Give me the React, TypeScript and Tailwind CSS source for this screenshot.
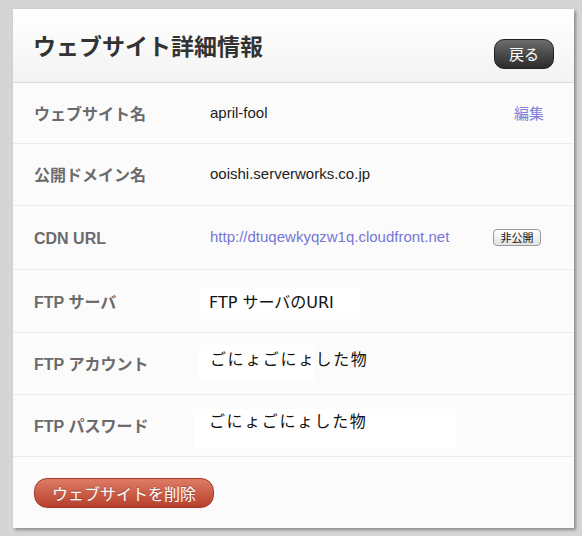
import React from "react";

const SANS = "font-['Liberation_Sans','Noto_Sans_CJK_JP',sans-serif]";
const CJK = "font-['Noto_Sans_CJK_JP','Liberation_Sans',sans-serif]";
const FTP_FONT = "font-['DejaVu_Sans','Noto_Sans_CJK_JP',sans-serif]";

interface FtpBox {
  w: string;
  h: string;
  mt: string;
  pl: string;
  pt: string;
  ml: string;
}

interface Row {
  label: string;
  height: string;
  value?: string;
  link?: string;
  ftp?: FtpBox;
  action?: "edit" | "private";
}

const ROWS: Row[] = [
  { label: "ウェブサイト名", height: "h-[61px]", value: "april-fool", action: "edit" },
  { label: "公開ドメイン名", height: "h-[62px]", value: "ooishi.serverworks.co.jp" },
  {
    label: "CDN URL",
    height: "h-[64px]",
    link: "http://dtuqewkyqzw1q.cloudfront.net",
    action: "private",
  },
  {
    label: "FTP サーバ",
    height: "h-[63px]",
    value: "FTP サーバのURI",
    ftp: { w: "w-[160px]", h: "h-[32px]", mt: "mt-[17px]", pl: "pl-[9px]", pt: "pt-[6px]", ml: "-ml-[10px]" },
  },
  {
    label: "FTP アカウント",
    height: "h-[62px]",
    value: "ごにょごにょした物",
    ftp: { w: "w-[116px]", h: "h-[36px]", mt: "mt-[12px]", pl: "pl-[11px]", pt: "pt-[5px]", ml: "-ml-[11px]" },
  },
  {
    label: "FTP パスワード",
    height: "h-[62px]",
    value: "ごにょごにょした物",
    ftp: { w: "w-[263px]", h: "h-[39px]", mt: "mt-[14px]", pl: "pl-[16px]", pt: "pt-[3px]", ml: "-ml-[17px]" },
  },
];

function DetailRow({ row }: { row: Row }) {
  if (row.ftp) {
    const f = row.ftp;
    return (
      <div className={`flex ${row.height} border-b border-[#ececec]`}>
        <div className={`w-[197px] shrink-0 pl-[21px] pt-[3px] self-center text-[16px] font-bold text-[#6b6b6b] ${SANS}`}>
          {row.label}
        </div>
        <div
          className={`${f.w} ${f.h} ${f.mt} ${f.pl} ${f.pt} ${f.ml} bg-white whitespace-nowrap text-[16px] leading-[20px] text-[#111] ${FTP_FONT} ${
            row.label === "FTP サーバ" ? "" : "tracking-[1.6px]"
          }`}
        >
          {row.value}
        </div>
      </div>
    );
  }
  return (
    <div className={`flex items-center ${row.height} border-b border-[#ececec]`}>
      <div className={`w-[197px] shrink-0 pl-[21px] pt-[3px] text-[16px] font-bold text-[#6b6b6b] ${SANS}`}>
        {row.label}
      </div>
      <div className={`flex-1 text-[15px] ${SANS} ${row.link ? "text-[#7676d4]" : "text-[#222]"}`}>
        {row.link ?? row.value}
      </div>
      {row.action === "edit" && (
        <span className={`mr-[30px] text-[15px] text-[#7f7fd8] ${CJK}`}>編集</span>
      )}
      {row.action === "private" && (
        <button
          className={`mr-[33px] w-[48px] h-[17px] rounded-[4px] border border-[#9a9a9a] bg-gradient-to-b from-white to-[#e2e2e2] text-[11px] leading-[15px] text-[#111] ${CJK}`}
        >
          非公開
        </button>
      )}
    </div>
  );
}

export default function App() {
  return (
    <div className="w-[582px] h-[536px] bg-[#d5d5d5] pt-[9px] pl-[13px]">
      <div className="w-[561px] h-[519px] bg-[#fbfbfb] shadow-[2px_2px_3px_rgba(0,0,0,0.35)] flex flex-col">
        <div className="flex justify-between h-[74px] px-[20px] border-b border-[#dadada] bg-gradient-to-b from-white to-[#f3f3f3]">
          <h1 className={`self-center -mt-[1px] text-[23px] font-bold text-[#333] ${CJK}`}>
            ウェブサイト詳細情報
          </h1>
          <button
            className={`self-end mb-[13px] w-[60px] h-[30px] rounded-[10px] border border-[#222] bg-gradient-to-b from-[#6c6c6c] to-[#2c2c2c] text-[15px] text-white ${CJK}`}
          >
            戻る
          </button>
        </div>
        {ROWS.map((r) => (
          <DetailRow key={r.label} row={r} />
        ))}
        <div className="pl-[21px] pt-[21px]">
          <button
            className={`w-[180px] h-[30px] rounded-[13px] border border-[#a23a27] bg-gradient-to-b from-[#de7b66] to-[#b63f2a] text-[16px] text-white [text-shadow:0_-1px_0_rgba(0,0,0,0.25)] ${CJK}`}
          >
            ウェブサイトを削除
          </button>
        </div>
      </div>
    </div>
  );
}
